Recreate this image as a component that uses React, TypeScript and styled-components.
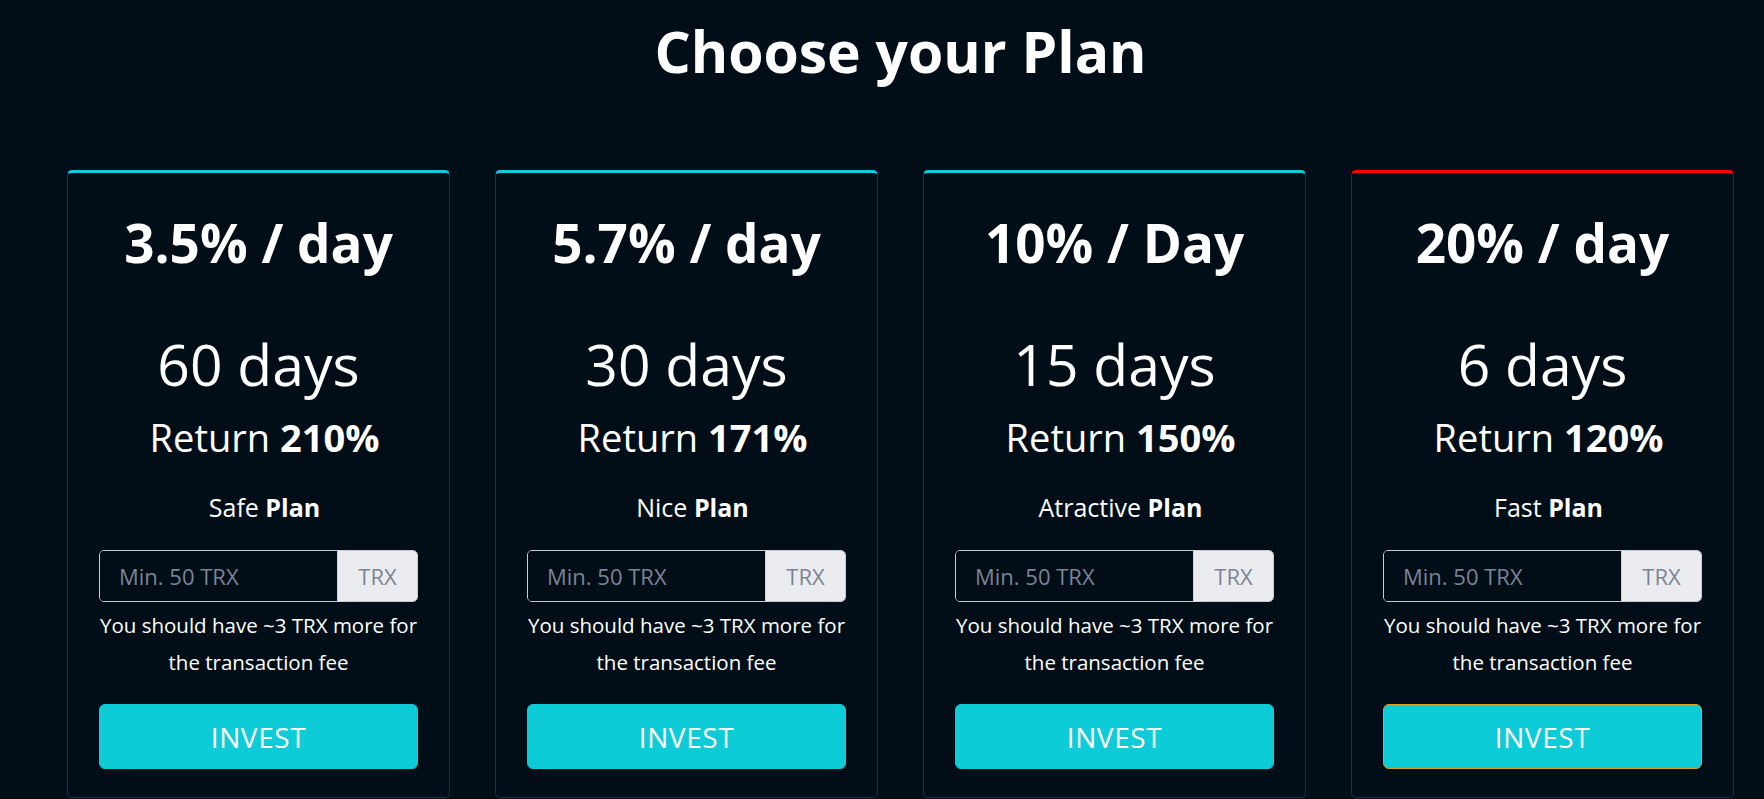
import React from "react";
import styled, { createGlobalStyle } from "styled-components";

const Global = createGlobalStyle`
  html, body { margin: 0; padding: 0; background: #010d17; }
  body { font-family: "Open Sans", "Noto Sans", sans-serif; color: #ffffff; overflow: hidden; }
  * { box-sizing: border-box; }
`;

const Page = styled.main`
  min-height: 799px;
  padding: 19px 30px 0 67px;
  background: #010d17;
`;

const Title = styled.h1`
  margin: 0;
  font-size: 57px;
  line-height: 64px;
  font-weight: 700;
  text-align: center;
`;

const Grid = styled.section`
  margin-top: 87px;
  display: grid;
  grid-template-columns: repeat(4, 383px);
  column-gap: 45px;
`;

const Card = styled.article<{ $accent: string }>`
  display: flex;
  flex-direction: column;
  align-items: stretch;
  border: 1px solid #0b3550;
  border-top: 3px solid ${(p) => p.$accent};
  border-radius: 5px;
  padding: 40px 31px 28px;
  text-align: center;
`;

const Rate = styled.div`
  font-size: 53px;
  line-height: 60px;
  font-weight: 700;
`;

const Days = styled.div`
  margin-top: 58px;
  font-size: 57px;
  line-height: 66px;
  font-weight: 400;
`;

const Return = styled.div`
  margin-top: 17px;
  padding-left: 12px;
  font-size: 38px;
  line-height: 46px;
  font-weight: 400;
  b { font-weight: 700; }
`;

const PlanName = styled.div`
  margin-top: 33px;
  padding-left: 12px;
  font-size: 25px;
  line-height: 28px;
  b { font-weight: 700; }
`;

const InputGroup = styled.div`
  margin-top: 29px;
  height: 52px;
  display: flex;
  border: 1px solid #c9ccd1;
  border-radius: 5px;
  overflow: hidden;
`;

const AmountInput = styled.input`
  flex: 1;
  min-width: 0;
  border: none;
  outline: none;
  background: #010d17;
  padding: 0 0 0 19px;
  font-family: inherit;
  font-size: 22px;
  color: #ffffff;
  &::placeholder { color: #7b8495; }
`;

const Addon = styled.span`
  width: 80px;
  display: flex;
  align-items: center;
  justify-content: center;
  background: #ebecef;
  border-left: 1px solid #d0d3d8;
  color: #7b8495;
  font-size: 22px;
`;

const Hint = styled.p`
  margin: 5px -6px 0;
  font-size: 20.5px;
  line-height: 37px;
`;

const InvestButton = styled.button<{ $ring?: boolean }>`
  margin-top: 23px;
  height: 65px;
  border: 1px solid ${(p) => (p.$ring ? "#d9a21b" : "#0ecbd8")};
  border-radius: 6px;
  background: #0ecbd8;
  color: #ffffff;
  font-family: inherit;
  font-size: 28px;
  letter-spacing: 0.6px;
  font-weight: 400;
  cursor: pointer;
`;

type Plan = { rate: string; days: string; ret: string; name: string; accent: string; ring?: boolean };

const plans: Plan[] = [
  { rate: "3.5% / day", days: "60 days", ret: "210%", name: "Safe", accent: "#0dcbd9" },
  { rate: "5.7% / day", days: "30 days", ret: "171%", name: "Nice", accent: "#0dcbd9" },
  { rate: "10% / Day", days: "15 days", ret: "150%", name: "Atractive", accent: "#0dcbd9" },
  { rate: "20% / day", days: "6 days", ret: "120%", name: "Fast", accent: "#ff0000", ring: true },
];

export default function App() {
  return (
    <>
      <Global />
      <Page>
        <Title>Choose your Plan</Title>
        <Grid>
          {plans.map((p) => (
            <Card key={p.rate} $accent={p.accent}>
              <Rate>{p.rate}</Rate>
              <Days>{p.days}</Days>
              <Return>
                Return <b>{p.ret}</b>
              </Return>
              <PlanName>
                {p.name} <b>Plan</b>
              </PlanName>
              <InputGroup>
                <AmountInput placeholder="Min. 50 TRX" />
                <Addon>TRX</Addon>
              </InputGroup>
              <Hint>You should have ~3 TRX more for the transaction fee</Hint>
              <InvestButton $ring={p.ring}>INVEST</InvestButton>
            </Card>
          ))}
        </Grid>
      </Page>
    </>
  );
}
